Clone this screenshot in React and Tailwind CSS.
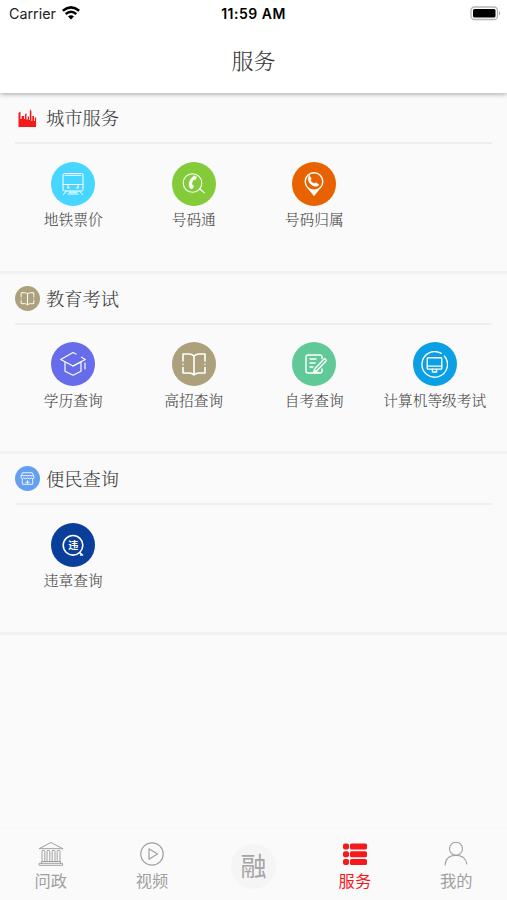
function Svg({ children, size = 26, width = 1.3, className = "" }) {
  return (
    <svg
      width={size}
      height={size}
      viewBox="0 0 26 26"
      fill="none"
      stroke="currentColor"
      strokeWidth={width}
      strokeLinecap="round"
      strokeLinejoin="round"
      className={className}
    >
      {children}
    </svg>
  );
}

function TrainIcon() {
  return (
    <Svg width={1}>
      <rect x="3" y="2.5" width="20" height="17.5" rx="1.5" />
      <path d="M5 4.300h16M3 13.500h20M8 14v3M18 14v3M7.500 16.800h2M16.500 16.800h2M9 21.200h8M8 23h10M6 20.500l-2.500 3M20 20.500l2.500 3" />
    </Svg>
  );
}

function PhoneSearchIcon() {
  return (
    <Svg width={1.1}>
      <circle cx="11.5" cy="12" r="9.3" />
      <path d="M18.500 17.500l4.800 4.300" />
      <path
        d="M13 5.200l2.500.5-.9 3-2.100-.1c-1.200 1.500-1.700 3.300-1.600 5.200l1.700.9-1.300 3-2.300-.5c-2-4-.6-9.500 4-12z"
        fill="currentColor"
        strokeWidth="0.5"
      />
    </Svg>
  );
}

function PhonePinIcon() {
  return (
    <Svg width={1.4}>
      <circle cx="13" cy="10.5" r="8.8" />
      <path d="M8 18.500l5 6.300 5-6.300q-5 2.300-10 0z" fill="currentColor" strokeWidth="0.6" />
      <path
        d="M8.300 4.500l2 3.200-.9 1.500c.8 1.600 2 2.700 3.800 3.400l1.500-.9 3.300 2c-1.500 2-4.200 2-6.800.5-3.500-2.200-5.300-6.200-2.900-9.700z"
        fill="currentColor"
        strokeWidth="0.5"
      />
    </Svg>
  );
}

function CapIcon() {
  return (
    <Svg width={1.2}>
      <path d="M16 3l-3-1.500L.7 8.500 13 15l12.300-6.500-3.800-2.300" />
      <path d="M5 11.500v8.700l8 4 8-4v-8.700M13 15l8-4M25 12v6" />
    </Svg>
  );
}

function BookIcon({ size = 26, width = 1.6 }) {
  return (
    <Svg size={size} width={width}>
      <path d="M13 5v18M13 5Q11 3 8 3H2v7M13 5q2-2 5-2h6v7M2 16.500V22h6q3 0 5 1.800M24 16.500V22h-6q-3 0-5 1.800M2 13.200v.1M24 13.200v.1" />
    </Svg>
  );
}

function NoteIcon() {
  return (
    <Svg width={1.4}>
      <path d="M21 7.500V6q0-2-2-2H7Q5 4 5 6v14q0 2 2 2h12q2 0 2-2v-2M9 8h6M9 12h5M9 16h3" />
      <path d="M23.500 7.500l2 2-9.500 10-3.500 1.500 1.500-3.500zM13 21.500h5" />
    </Svg>
  );
}

function ComputerIcon() {
  return (
    <Svg size={27} width={1.3}>
      <path d="M19.500 2.300a12.300 12.300 0 1 0 3 2.500" />
      <rect x="6" y="6.5" width="14" height="11" rx="0.8" />
      <path d="M6 14.500h14M11 17.500v2.700h4v-2.700M11 20.200h4" />
    </Svg>
  );
}

function ViolationIcon() {
  return (
    <span className="relative flex size-[26px] items-center justify-center">
      <Svg width={1.6} className="absolute inset-0">
        <circle cx="13" cy="13.3" r="9.8" />
        <path d="M19.500 20.500l3 2.500h-2" />
      </Svg>
      <span className="font-['Noto_Sans_CJK_SC',sans-serif] text-[10px] leading-none font-bold">违</span>
    </span>
  );
}

function CityIcon() {
  return (
    <svg width="20" height="20" viewBox="0 0 20 20" fill="#f5191c" className="-translate-x-[1px]">
      <path d="M1.500 19V5L3.500 3.500v7.500h1.200V8H7v3h1V6.500L9.500 5v6.500h1.300V8.500H12V12h.8V3.500l.7-2.500.9 2.500V13h.9V8h1.700v5h.9V9.500h1.200V19z" />
    </svg>
  );
}

function ShopIcon() {
  return (
    <Svg size={15} width={1.5}>
      <path d="M5 3h16l3 6v3q-2 3-4.500 0-3 3-6.500 0-3 3-6.500 0Q4 15 2 12V9zM4 14v9h18v-9M3 8h20" />
      <path d="M10 19.500h6M13 16.500v5" />
    </Svg>
  );
}

function BankIcon() {
  return (
    <Svg width={1}>
      <path d="M1.500 7.500L13 1.500l11.500 6zM1.500 22.300h23v2h-23zM3.500 22v-1.500h19V22" />
      <rect x="4" y="9.5" width="2.8" height="11" rx="1" />
      <rect x="9" y="9.5" width="2.8" height="11" rx="1" />
      <rect x="14.2" y="9.5" width="2.8" height="11" rx="1" />
      <rect x="19.2" y="9.5" width="2.8" height="11" rx="1" />
    </Svg>
  );
}

function PlayIcon() {
  return (
    <Svg width={1.2}>
      <circle cx="13" cy="13" r="11.2" />
      <path d="M10 7.800v10.400l8.500-5.200z" />
    </Svg>
  );
}

function ListIcon() {
  return (
    <svg width="26" height="26" viewBox="0 0 26 26" fill="currentColor">
      {[2.5, 10.2, 17.9].map((y) => (
        <g key={y}>
          <rect x="1" y={y} width="6" height="6" rx="2" />
          <rect x="8" y={y} width="17" height="6" rx="1.5" />
        </g>
      ))}
    </svg>
  );
}

function UserIcon() {
  return (
    <Svg width={1.1}>
      <circle cx="13" cy="7.7" r="6.5" />
      <path d="M2.200 24c0-6 4-9.800 10.800-9.800S23.300 18.500 23.800 23" />
    </Svg>
  );
}

const sections = [
  {
    title: "城市服务",
    icon: <CityIcon />,
    badge: "",
    items: [
      { label: "地铁票价", color: "bg-[#46d6ff]", icon: <TrainIcon /> },
      { label: "号码通", color: "bg-[#83cb39]", icon: <PhoneSearchIcon /> },
      { label: "号码归属", color: "bg-[#e96200]", icon: <PhonePinIcon /> },
    ],
  },
  {
    title: "教育考试",
    icon: <BookIcon size={15} width={1.7} />,
    badge: "bg-[#aca17c]",
    items: [
      { label: "学历查询", color: "bg-[#666cea]", icon: <CapIcon /> },
      { label: "高招查询", color: "bg-[#aca17c]", icon: <BookIcon /> },
      { label: "自考查询", color: "bg-[#61c897]", icon: <NoteIcon /> },
      { label: "计算机等级考试", color: "bg-[#0ba0e5]", icon: <ComputerIcon /> },
    ],
  },
  {
    title: "便民查询",
    icon: <ShopIcon />,
    badge: "bg-[#659ff0]",
    items: [{ label: "违章查询", color: "bg-[#093f9b]", icon: <ViolationIcon /> }],
  },
];

function StatusBar() {
  return (
    <div className="grid h-[27px] grid-cols-3 items-center font-['Inter','Liberation_Sans',sans-serif] text-black">
      <div className="flex items-center gap-[6px] pl-[9px] text-[14.3px] text-[#222]">
        <span>Carrier</span>
        <svg width="18" height="14" viewBox="0 0 18 14" fill="none" stroke="#000" strokeWidth="2.5" className="-mt-[2px]">
          <path d="M.8 4.700q8.200-6.700 16.400 0M3.700 8q5.300-4.500 10.600 0" />
          <path d="M6 10.500q3-2.500 6 0l-3 3z" fill="#000" stroke="none" />
        </svg>
      </div>
      <div className="text-center text-[14px] font-semibold tracking-[0.5px]">11:59 AM</div>
      <div className="flex justify-end pr-[6px]">
        <svg width="31" height="15" viewBox="0 0 31 15" className="-mt-[1px]">
          <rect x="1" y="1" width="26.5" height="12.5" rx="3.5" fill="#fff" stroke="#b5b5b5" strokeWidth="1.3" />
          <rect x="3" y="3" width="22.5" height="8.5" rx="1.5" />
          <path d="M29 5q2.200 2.200 0 4.500z" fill="#aaa" />
        </svg>
      </div>
    </div>
  );
}

function Section({ title, icon, badge, items }) {
  return (
    <section className="h-[180.5px] border-b-[3px] border-[#f1f1f1]">
      <div className="mx-[15px] flex h-[51px] items-center gap-[6px] border-b-2 border-[#eeeeee]">
        <span className={`flex size-[25px] items-center justify-center rounded-full text-white ${badge}`}>
          {icon}
        </span>
        <h2 className="text-[18.3px] leading-none">{title}</h2>
      </div>
      <div className="grid grid-cols-4 pt-[17.5px] pr-[12px] pl-[13px]">
        {items.map((item) => (
          <div key={item.label} className="flex flex-col items-center">
            <span className={`flex size-[44px] items-center justify-center rounded-full text-white ${item.color}`}>
              {item.icon}
            </span>
            <span className="mt-[5.5px] text-[14.7px] leading-[16px] whitespace-nowrap text-[#444]">{item.label}</span>
          </div>
        ))}
      </div>
    </section>
  );
}

function Tab({ icon, label, active }) {
  return (
    <div className={`flex flex-col items-center pt-[12px] ${active ? "text-[#f5191c]" : "text-[#a0a0a0]"}`}>
      {icon}
      <span className="mt-[4px] text-[16.3px] leading-[18px]">{label}</span>
    </div>
  );
}

export default function App() {
  return (
    <div className="flex h-[900px] w-[507px] flex-col overflow-hidden bg-[#fafafa] font-['Noto_Serif_CJK_SC','Noto_Sans_CJK_SC',serif] text-[#383838]">
      <header className="relative h-[93px] shrink-0 bg-white shadow-[0_1px_5px_rgba(0,0,0,0.35)]">
        <StatusBar />
        <h1 className="flex h-[64px] items-center justify-center text-[22px] font-light">服务</h1>
      </header>
      <main className="flex-1 font-light">
        {sections.map((section) => (
          <Section key={section.title} {...section} />
        ))}
      </main>
      <nav className="grid h-[72px] shrink-0 grid-cols-5 border-t border-[#f6f6f6] font-['Noto_Sans_CJK_SC',sans-serif]">
        <Tab icon={<BankIcon />} label="问政" />
        <Tab icon={<PlayIcon />} label="视频" />
        <div className="flex items-center justify-center pt-[3px]">
          <span className="flex size-[45px] items-center justify-center rounded-full bg-[#f5f5f5] pb-[3px] text-[26px] leading-none text-[#a5a5a5]">
            融
          </span>
        </div>
        <Tab icon={<ListIcon />} label="服务" active />
        <Tab icon={<UserIcon />} label="我的" />
      </nav>
    </div>
  );
}
